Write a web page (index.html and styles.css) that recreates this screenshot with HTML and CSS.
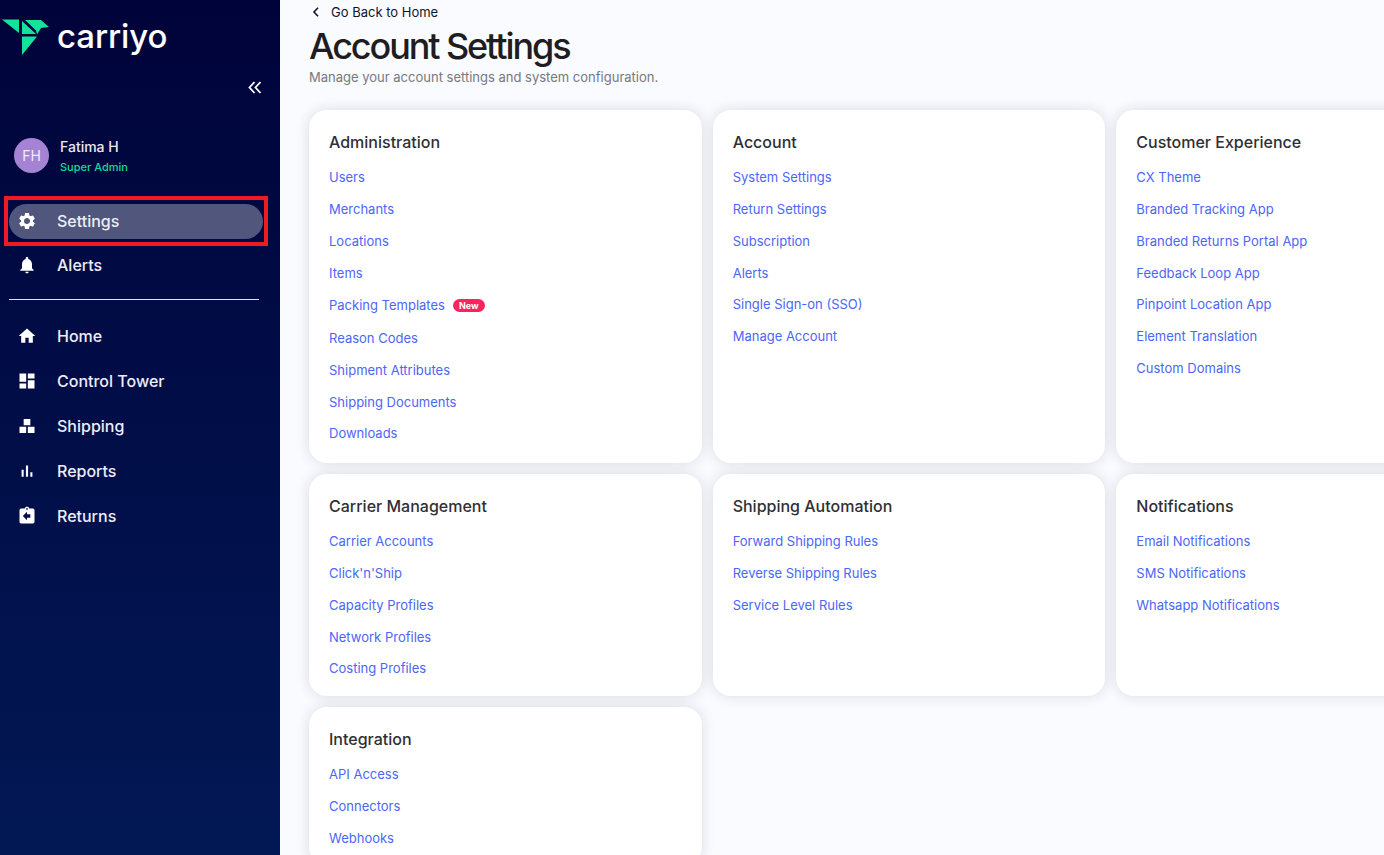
FILE: index.html
```html
<!DOCTYPE html>
<html lang="en">
<head>
<meta charset="utf-8">
<title>Account Settings</title>
<link rel="stylesheet" href="styles.css">
</head>
<body>
<div class="app">
  <aside class="sidebar">
    <div class="brand">
      <svg class="brand-mark" width="50" height="56" viewBox="0 0 50 56" aria-hidden="true">
        <path fill="#12e29a" d="M2 19.500h17V33z"/>
        <path fill="#12e29a" d="M22 21v13h14z"/>
        <path fill="#12e29a" d="M25 20h16l8 7-8 1-4 6.500-1-4z"/>
        <path fill="#12e29a" d="M22 36.500h15L22 55z"/>
      </svg>
      <span class="brand-name">carriyo</span>
    </div>
    <div class="collapse-row">
      <svg width="14" height="14" viewBox="0 0 14 14" aria-hidden="true"><path d="M6.500 2 1.500 7.500l5 5.500M12.500 2l-5 5.500 5 5.500" fill="none" stroke="#fff" stroke-width="1.800"/></svg>
    </div>
    <div class="user">
      <div class="avatar">FH</div>
      <div class="user-text">
        <div class="user-name">Fatima H</div>
        <div class="user-role">Super Admin</div>
      </div>
    </div>
    <div class="highlight">
      <a class="nav-item nav-active">
        <svg class="nav-icon" viewBox="0 0 24 24"><path d="M19.140 12.940c.04-.3.060-.61.060-.94 0-.32-.020-.64-.070-.94l2.030-1.580a.49.49 0 0 0 .12-.61l-1.920-3.320a.49.49 0 0 0-.59-.22l-2.390.96c-.5-.38-1.030-.7-1.620-.94l-.36-2.540a.48.48 0 0 0-.48-.41h-3.840c-.24 0-.43.17-.47.41l-.36 2.540c-.59.24-1.130.57-1.620.94l-2.390-.96c-.22-.08-.47 0-.59.22L2.740 8.870c-.12.21-.080.47.12.61l2.030 1.580c-.05.3-.09.63-.09.94s.02.64.07.94l-2.030 1.580a.49.49 0 0 0-.12.61l1.920 3.320c.12.22.37.29.59.22l2.390-.96c.5.38 1.030.7 1.620.94l.36 2.540c.05.24.24.41.48.41h3.840c.24 0 .44-.17.47-.41l.36-2.540c.59-.24 1.130-.56 1.620-.94l2.390.96c.22.08.47 0 .59-.22l1.920-3.320c.12-.22.070-.47-.12-.61l-2.010-1.580zM12 15.600A3.610 3.610 0 0 1 8.400 12c0-1.980 1.620-3.600 3.600-3.600s3.600 1.620 3.600 3.600-1.620 3.600-3.600 3.600z"/></svg>
        <span>Settings</span>
      </a>
    </div>
    <a class="nav-item nav-alerts">
      <svg class="nav-icon" viewBox="0 0 24 24"><path d="M12 22c1.100 0 2-.9 2-2h-4c0 1.100.9 2 2 2zm6-6v-5c0-3.070-1.630-5.640-4.500-6.320V4c0-.83-.67-1.500-1.500-1.500s-1.500.67-1.500 1.500v.68C7.640 5.360 6 7.920 6 11v5l-2 2v1h16v-1l-2-2z"/></svg>
      <span>Alerts</span>
    </a>
    <hr class="nav-divider">
    <nav class="nav-main">
      <a class="nav-item">
        <svg class="nav-icon" viewBox="0 0 24 24"><path d="M10 20v-6h4v6h5v-8h3L12 3 2 12h3v8z"/></svg>
        <span>Home</span>
      </a>
      <a class="nav-item">
        <svg class="nav-icon" viewBox="0 0 24 24"><path d="M3 13h8V3H3v10zm0 8h8v-6H3v6zm10 0h8V11h-8v10zm0-18v6h8V3h-8z"/></svg>
        <span>Control Tower</span>
      </a>
      <a class="nav-item">
        <svg class="nav-icon" viewBox="0 0 24 24"><path d="M8 3.500h8v7.500H8zM3 13h8v7.500H3zM13 13h8v7.500h-8z"/></svg>
        <span>Shipping</span>
      </a>
      <a class="nav-item">
        <svg class="nav-icon" viewBox="0 0 24 24"><path d="M5.500 10.500h2.500V19H5.500zM10.700 5.500h2.600V19h-2.600zM16 13.500h2.500V19H16z"/></svg>
        <span>Reports</span>
      </a>
      <a class="nav-item">
        <svg class="nav-icon" viewBox="0 0 24 24"><path fill-rule="evenodd" d="M19 3h-4.180C14.400 1.840 13.300 1 12 1s-2.400.84-2.820 2H5a2 2 0 0 0-2 2v14c0 1.100.9 2 2 2h14a2 2 0 0 0 2-2V5a2 2 0 0 0-2-2zm-7-.5a1 1 0 1 1 0 2 1 1 0 0 1 0-2zM16 14h-4v3l-5-5 5-5v3h4v4z"/></svg>
        <span>Returns</span>
      </a>
    </nav>
  </aside>

  <main class="content">
    <a class="back-link">
      <svg width="8" height="10" viewBox="0 0 8 10" aria-hidden="true"><path d="M6 .8 2 5l4 4.200" fill="none" stroke="#10132e" stroke-width="1.600"/></svg>
      <span>Go Back to Home</span>
    </a>
    <h1 class="page-title">Account Settings</h1>
    <p class="page-sub">Manage your account settings and system configuration.</p>

    <div class="card-grid">
      <section class="card">
        <h2 class="card-title">Administration</h2>
        <ul class="links">
          <li>Users</li><li>Merchants</li><li>Locations</li><li>Items</li>
          <li class="with-badge">Packing Templates <span class="badge">New</span></li>
          <li>Reason Codes</li><li>Shipment Attributes</li><li>Shipping Documents</li><li>Downloads</li>
        </ul>
      </section>
      <section class="card">
        <h2 class="card-title">Account</h2>
        <ul class="links">
          <li>System Settings</li><li>Return Settings</li><li>Subscription</li><li>Alerts</li><li>Single Sign-on (SSO)</li><li>Manage Account</li>
        </ul>
      </section>
      <section class="card">
        <h2 class="card-title">Customer Experience</h2>
        <ul class="links">
          <li>CX Theme</li><li>Branded Tracking App</li><li>Branded Returns Portal App</li><li>Feedback Loop App</li><li>Pinpoint Location App</li><li>Element Translation</li><li>Custom Domains</li>
        </ul>
      </section>
      <section class="card">
        <h2 class="card-title">Carrier Management</h2>
        <ul class="links">
          <li>Carrier Accounts</li><li>Click'n'Ship</li><li>Capacity Profiles</li><li>Network Profiles</li><li>Costing Profiles</li>
        </ul>
      </section>
      <section class="card">
        <h2 class="card-title">Shipping Automation</h2>
        <ul class="links">
          <li>Forward Shipping Rules</li><li>Reverse Shipping Rules</li><li>Service Level Rules</li>
        </ul>
      </section>
      <section class="card">
        <h2 class="card-title">Notifications</h2>
        <ul class="links">
          <li>Email Notifications</li><li>SMS Notifications</li><li>Whatsapp Notifications</li>
        </ul>
      </section>
      <section class="card">
        <h2 class="card-title">Integration</h2>
        <ul class="links">
          <li>API Access</li><li>Connectors</li><li>Webhooks</li>
        </ul>
      </section>
    </div>
  </main>
</div>
</body>
</html>
```

FILE: styles.css
```css
* { box-sizing: border-box; }
html, body { margin: 0; height: 100%; overflow: hidden; }
body { font-family: Inter, "Liberation Sans", sans-serif; background: #fafbff; }
.app { display: flex; height: 855px; width: 1384px; overflow: hidden; }

.sidebar {
  flex: 0 0 280px;
  height: 855px;
  background: linear-gradient(180deg, #00033a 0%, #021855 100%);
  color: #eef0f8;
  display: flex;
  flex-direction: column;
  font-family: Inter, sans-serif;
}
.brand { display: flex; align-items: flex-start; height: 71px; }
.brand-mark { flex: none; }
.brand-name {
  font-family: Inter, sans-serif;
  font-size: 33px;
  line-height: 34px;
  font-weight: 500;
  color: #fff;
  margin: 19px 0 0 7px;
  letter-spacing: -0.100px;
}
.collapse-row { height: 16px; display: flex; justify-content: flex-end; padding-right: 18px; margin-top: 9px; }
.user { display: flex; align-items: center; gap: 11px; padding-left: 14px; margin-top: 35px; height: 48px; }
.avatar {
  width: 35px; height: 35px; border-radius: 50%;
  background: #a583d3; color: #f1eaf9;
  display: flex; align-items: center; justify-content: center;
  font-size: 14px;
}
.user-name { font-size: 14px; font-weight: 500; line-height: 18px; color: #e8eaf4; margin-top: 1px; }
.user-role { font-size: 11px; font-weight: 500; line-height: 14px; color: #0fdc99; margin-top: 4px; }

.highlight {
  margin: 17px 12px 0 4px;
  height: 50px;
  border: 4px solid #ed1c24;
  padding: 4px 1px 3px;
  display: flex;
}
.nav-item {
  display: flex; align-items: center;
  height: 45px;
  padding-left: 17px;
  gap: 20px;
  font-size: 16px;
  font-weight: 500;
  color: #eceef7;
}
.nav-icon { width: 20px; height: 20px; fill: #fff; flex: none; }
.nav-active {
  flex: 1; height: 35px; background: #50567c; border-radius: 18px;
  padding-left: 8px;
  padding-bottom: 2px;
}
.nav-alerts { margin-top: -4px; }
.nav-divider { border: 0; height: 1px; background: #dfe2f0; margin: 12px 21px 13px 9px; width: 250px; }
.nav-main { display: flex; flex-direction: column; }

.content { flex: 1; min-width: 0; padding: 0 0 0 29px; }
.back-link { display: flex; align-items: center; gap: 11px; height: 24px; margin-bottom: 1px; padding-left: 3px; font-size: 13px; color: #10132e; }
.page-title { margin: 0 0 1px; font-size: 36px; line-height: 42px; font-weight: 500; letter-spacing: -2.100px; color: #1d1d22; }
.page-sub { margin: 1px 0 0; font-size: 13px; line-height: 18px; color: #77787f; }

.card-grid {
  display: grid;
  grid-template-columns: repeat(3, 392.670px);
  grid-template-rows: 353px 222px auto;
  gap: 11px;
  margin-top: 24px;
}
.card {
  background: #fff;
  border-radius: 18px;
  padding: 21px 20px 11.500px;
  box-shadow: 0 0 14px rgba(20, 25, 60, 0.14);
}
.card-title { margin: 0 0 8.600px; font-size: 16px; line-height: 22px; font-weight: 500; color: #2f2f35; }
.links { list-style: none; margin: 0; padding: 0; }
.links li { height: 31.700px; display: flex; align-items: center; font-size: 13px; color: #4c66f8; }
.links .with-badge { height: 34px; gap: 8px; }
.badge {
  display: inline-block; height: 13px; line-height: 13px; padding: 0 6px; border-radius: 7px;
  background: #fb2360; color: #fff; font-size: 9px; font-weight: 700;
}
```
